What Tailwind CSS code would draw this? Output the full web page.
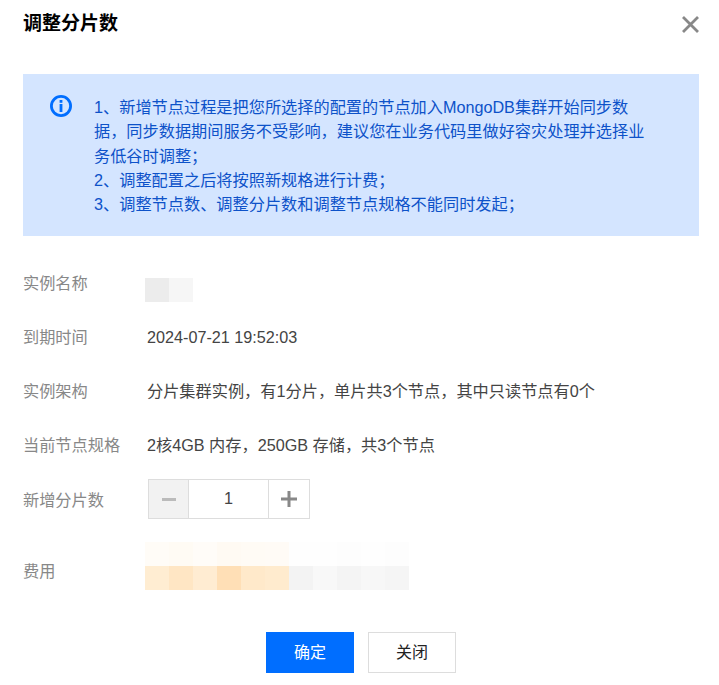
<!DOCTYPE html>
<html lang="zh-CN">

<head>
  <meta charset="UTF-8">
  <meta name="viewport" content="width=device-width, initial-scale=1.0">
  <title>调整分片数</title>
  <script src="https://cdn.jsdelivr.net/npm/@tailwindcss/browser@4"></script>
</head>

<body class="bg-white h-[685px] w-[719px] overflow-hidden font-['Liberation_Sans','Noto_Sans_CJK_SC',sans-serif] text-[16.2px] text-[#444]">
  <div class="pl-[23px] pr-[20px] pt-[11px]">
    <!-- header -->
    <div class="flex items-center justify-between h-[26px]">
      <h2 class="text-[19px] leading-[26px] font-bold text-black">调整分片数</h2>
      <svg class="w-[17px] h-[17px]" viewBox="0 0 17 17" fill="none" stroke="#888" stroke-width="2.8">
        <path d="M1 1l15 15M16 1L1 16" />
      </svg>
    </div>

    <!-- notice -->
    <div class="mt-[37px] h-[162px] bg-[#d4e5ff] pt-[21px] pl-[27px] flex text-[#0d52c9]">
      <svg class="w-[22px] h-[22px] shrink-0" viewBox="0 0 22 22" fill="none">
        <circle cx="11" cy="11" r="9.6" stroke="#006eff" stroke-width="2.8" />
        <rect x="9.6" y="5" width="2.8" height="2.8" fill="#006eff" />
        <rect x="9.6" y="9" width="2.8" height="8" fill="#006eff" />
      </svg>
      <div class="ml-[22px] leading-[24.3px] whitespace-nowrap">
        <p>1、新增节点过程是把您所选择的配置的节点加入MongoDB集群开始同步数<br>据，同步数据期间服务不受影响，建议您在业务代码里做好容灾处理并选择业<br>务低谷时调整；</p>
        <p>2、调整配置之后将按照新规格进行计费；</p>
        <p>3、调整节点数、调整分片数和调整节点规格不能同时发起；</p>
      </div>
    </div>

    <!-- form rows -->
    <div class="mt-[34px] flex flex-col">
      <div class="flex h-[54px] items-start">
        <span class="w-[124px] leading-[27px] text-[#888]">实例名称</span>
        <div class="flex -ml-[2px] mt-[8px]">
          <div class="w-[24px] h-[24px] bg-[#ececec]"></div>
          <div class="w-[24px] h-[24px] bg-[#f6f6f6]"></div>
        </div>
      </div>
      <div class="flex h-[54px] items-start">
        <span class="w-[124px] leading-[27px] text-[#888]">到期时间</span>
        <span class="leading-[27px]">2024-07-21 19:52:03</span>
      </div>
      <div class="flex h-[54px] items-start">
        <span class="w-[124px] leading-[27px] text-[#888]">实例架构</span>
        <span class="leading-[27px]">分片集群实例，有1分片，单片共3个节点，其中只读节点有0个</span>
      </div>
      <div class="flex h-[54px] items-start">
        <span class="w-[124px] leading-[27px] text-[#888]">当前节点规格</span>
        <span class="leading-[27px]">2核4GB 内存，250GB 存储，共3个节点</span>
      </div>
      <div class="flex h-[62px] items-start">
        <span class="w-[125px] leading-[27px] text-[#888] mt-[1px]">新增分片数</span>
        <div class="flex -mt-[7px] h-[40px] border border-[#ddd] w-[162px]">
          <div class="w-[40px] bg-[#f2f2f2] border-r border-[#ddd] flex items-center justify-center">
            <div class="w-[14px] h-[3px] bg-[#bbb]"></div>
          </div>
          <div class="w-[79px] flex items-center justify-center pb-[2px]">1</div>
          <div class="w-[41px] border-l border-[#ddd] flex items-center justify-center">
            <svg class="w-[16px] h-[16px]" viewBox="0 0 16 16" fill="#888">
              <path d="M6.5 0h3v6.5H16v3H9.500V16h-3V9.500H0v-3h6.500z" />
            </svg>
          </div>
        </div>
      </div>
      <div class="flex items-center h-[48px] mt-[-6px]">
        <span class="w-[122px] text-[#888] mt-[10px]">费用</span>
        <div class="flex flex-col">
          <div class="flex h-[24px]">
            <div class="w-[24px] bg-[#fffcf7]"></div>
            <div class="w-[24px] bg-[#fffbf4]"></div>
            <div class="w-[24px] bg-[#fffcf8]"></div>
            <div class="w-[24px] bg-[#fffaf3]"></div>
            <div class="w-[24px] bg-[#fffbf5]"></div>
            <div class="w-[24px] bg-[#fffbf6]"></div>
            <div class="w-[24px] bg-[#fefefe]"></div>
            <div class="w-[24px] bg-[#fefefe]"></div>
            <div class="w-[24px] bg-[#fdfdfd]"></div>
            <div class="w-[24px] bg-[#fefefe]"></div>
            <div class="w-[24px] bg-[#fdfdfd]"></div>
          </div>
          <div class="flex h-[24px]">
            <div class="w-[24px] bg-[#ffedd2]"></div>
            <div class="w-[24px] bg-[#ffe6c4]"></div>
            <div class="w-[24px] bg-[#ffecd2]"></div>
            <div class="w-[24px] bg-[#ffdfb6]"></div>
            <div class="w-[24px] bg-[#ffe9ca]"></div>
            <div class="w-[24px] bg-[#ffebce]"></div>
            <div class="w-[24px] bg-[#f3f3f3]"></div>
            <div class="w-[24px] bg-[#f8f8f8]"></div>
            <div class="w-[24px] bg-[#f4f4f4]"></div>
            <div class="w-[24px] bg-[#f7f7f7]"></div>
            <div class="w-[24px] bg-[#f5f5f5]"></div>
          </div>
        </div>
      </div>
    </div>

    <!-- footer -->
    <div class="mt-[42px] flex justify-center gap-[14px]">
      <button class="w-[88px] h-[41px] bg-[#006eff] text-white text-base">确定</button>
      <button class="w-[88px] h-[41px] bg-white border border-[#ddd] text-[#222] text-base">关闭</button>
    </div>
  </div>
</body>

</html>
